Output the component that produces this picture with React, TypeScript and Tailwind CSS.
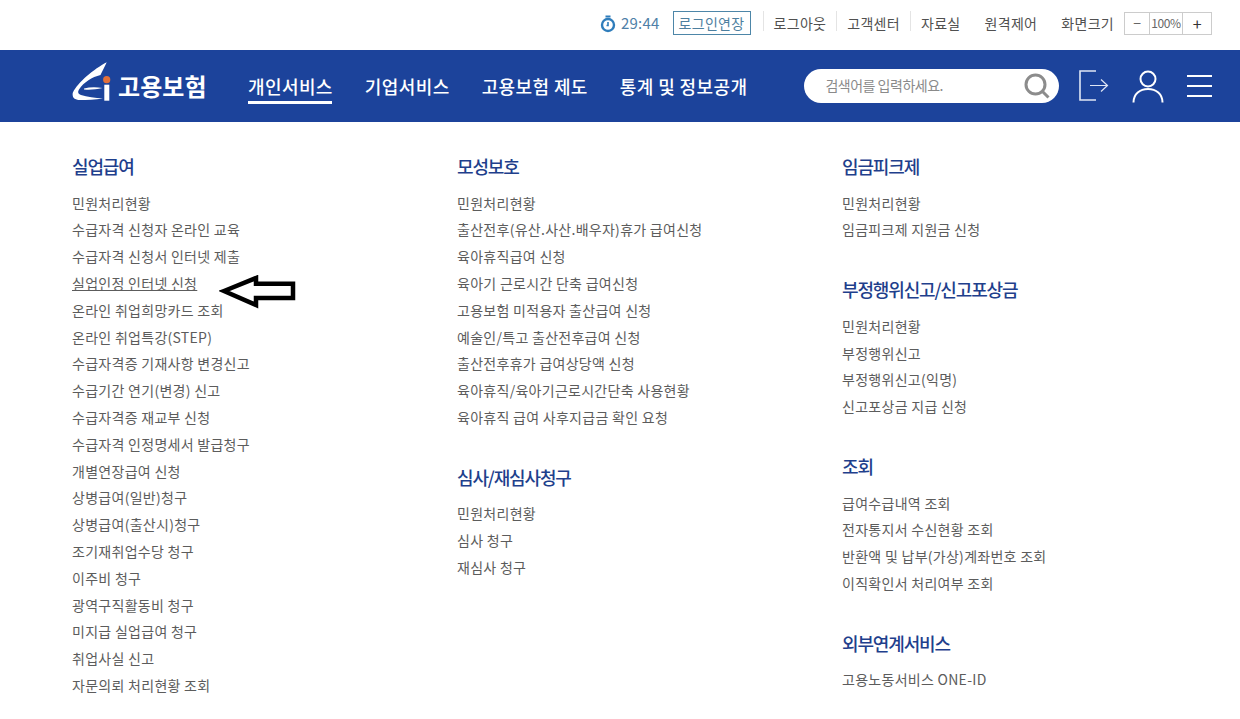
import React from "react";

const font = { fontFamily: '"Noto Sans CJK KR", "Noto Sans", sans-serif' };

type Group = { title: string; items: string[] };

const col1: Group[] = [
  {
    title: "실업급여",
    items: [
      "민원처리현황",
      "수급자격 신청자 온라인 교육",
      "수급자격 신청서 인터넷 제출",
      "실업인정 인터넷 신청",
      "온라인 취업희망카드 조회",
      "온라인 취업특강(STEP)",
      "수급자격증 기재사항 변경신고",
      "수급기간 연기(변경) 신고",
      "수급자격증 재교부 신청",
      "수급자격 인정명세서 발급청구",
      "개별연장급여 신청",
      "상병급여(일반)청구",
      "상병급여(출산시)청구",
      "조기재취업수당 청구",
      "이주비 청구",
      "광역구직활동비 청구",
      "미지급 실업급여 청구",
      "취업사실 신고",
      "자문의뢰 처리현황 조회",
    ],
  },
];

const col2: Group[] = [
  {
    title: "모성보호",
    items: [
      "민원처리현황",
      "출산전후(유산.사산.배우자)휴가 급여신청",
      "육아휴직급여 신청",
      "육아기 근로시간 단축 급여신청",
      "고용보험 미적용자 출산급여 신청",
      "예술인/특고 출산전후급여 신청",
      "출산전후휴가 급여상당액 신청",
      "육아휴직/육아기근로시간단축 사용현황",
      "육아휴직 급여 사후지급금 확인 요청",
    ],
  },
  {
    title: "심사/재심사청구",
    items: ["민원처리현황", "심사 청구", "재심사 청구"],
  },
];

const col3: Group[] = [
  { title: "임금피크제", items: ["민원처리현황", "임금피크제 지원금 신청"] },
  {
    title: "부정행위신고/신고포상금",
    items: ["민원처리현황", "부정행위신고", "부정행위신고(익명)", "신고포상금 지급 신청"],
  },
  {
    title: "조회",
    items: [
      "급여수급내역 조회",
      "전자통지서 수신현황 조회",
      "반환액 및 납부(가상)계좌번호 조회",
      "이직확인서 처리여부 조회",
    ],
  },
  { title: "외부연계서비스", items: ["고용노동서비스 ONE-ID"] },
];

function Column({ groups }: { groups: Group[] }) {
  return (
    <div className="w-[385px] shrink-0">
      {groups.map((g, i) => (
        <section key={g.title} className={i > 0 ? "mt-[32px]" : ""}>
          <h2 className="h-[30px] mb-[7.6px] text-[18px] leading-[28px] font-medium text-[#1f3f8c] tracking-[-1.15px]">
            {g.title}
          </h2>
          <ul>
            {g.items.map((t) => (
              <li
                key={t}
                className={
                  "h-[26.8px] text-[14px] leading-[26.8px] text-[#5c5c5c] tracking-[0.28px] whitespace-nowrap" +
                  (t === "실업인정 인터넷 신청" ? " underline" : "")
                }
              >
                {t}
              </li>
            ))}
          </ul>
        </section>
      ))}
    </div>
  );
}

function Sep() {
  return <span className="w-px h-[20px] mt-[-4px] bg-[#e4e4e4]" />;
}

export default function App() {
  return (
    <div style={font} className="relative w-[1240px] h-[719px] overflow-hidden bg-white">
      {/* top utility bar */}
      <div className="h-[50px] flex items-center justify-end pr-[28px] pb-[4px] text-[14px] text-[#505050] tracking-[0.3px]">
        <svg width="16" height="18" viewBox="0 0 16 18" className="mr-[5px] mt-[2px]">
          <rect x="5.5" y="0.5" width="5" height="2" fill="#2f7dbb" />
          <circle cx="8" cy="10" r="6" fill="none" stroke="#2f7dbb" strokeWidth="2.4" />
          <path d="M8 7v3.5h-1.5" fill="none" stroke="#2f7dbb" strokeWidth="1.6" />
        </svg>
        <span className="text-[#4f7fa8] text-[15px] tracking-[0.2px] mr-[13px]">29:44</span>
        <span className="w-[78px] h-[24px] border border-[#4d86a8] text-[#4d7f9f] flex items-center justify-center mr-[12px]">
          로그인연장
        </span>
        <Sep />
        <span className="ml-[10px] mr-[10px]">로그아웃</span>
        <Sep />
        <span className="mx-[10px]">고객센터</span>
        <Sep />
        <span className="ml-[10px] mr-[24px]">자료실</span>
        <span className="mr-[24px]">원격제어</span>
        <span className="mr-[10px]">화면크기</span>
        <div className="flex h-[23px] border border-[#cccccc] text-[#666666] text-[12px] tracking-[-0.4px]">
          <span className="w-[25px] flex items-center justify-center border-r border-[#cccccc] text-[14px]">−</span>
          <span className="w-[33px] flex items-center justify-center border-r border-[#cccccc]">100%</span>
          <span className="w-[28px] flex items-center justify-center text-[16px] text-[#333333]">+</span>
        </div>
      </div>

      {/* main nav */}
      <header className="h-[72px] bg-[#1c439b] flex items-center pl-[72px] text-white">
        <svg width="46" height="44" viewBox="0 0 46 44" className="mt-[-8px]">
          <path
            d="M34.700 2.300 C 22 9 6 22 0.700 33 C 0 38 3 40 8 40 C 15 40 23 40 31 38.500 C 23 38 15 37 9 35 C 6 34 5.500 32 7 29.500 C 12 22 20 17 28.500 15 C 30.500 11 33 6 34.700 2.300 Z"
            fill="#ffffff"
          />
          <path d="M12 28.500 C 18 27 24 27 30.500 28 C 24 29.500 18 30 12 29.500 Z" fill="#ffffff" />
          <circle cx="34.700" cy="19.700" r="3.600" fill="#e2703a" />
          <rect x="32.300" y="24.700" width="5" height="16" fill="#ffffff" />
        </svg>
        <span className="text-[24px] font-bold tracking-[0.1px] w-[130px] leading-none">고용보험</span>
        <nav className="flex items-center gap-[32px] text-[18px] font-medium tracking-[0.4px] h-full">
          <span className="relative">
            개인서비스
            <span className="absolute left-0 right-[1px] top-[28px] h-[3px] bg-white" />
          </span>
          <span>기업서비스</span>
          <span>고용보험 제도</span>
          <span>통계 및 정보공개</span>
        </nav>
        <div className="ml-[57px] mt-[-1px] w-[255px] h-[34px] rounded-full bg-white flex items-center justify-between pl-[21px] pr-[9px]">
          <span className="text-[14px] text-[#8a8a8a] tracking-[-0.5px]">검색어를 입력하세요.</span>
          <svg width="26" height="26" viewBox="0 0 26 26">
            <circle cx="11.500" cy="11.500" r="9.500" fill="none" stroke="#8c8c8c" strokeWidth="3" />
            <path d="M18.500 18.500l6 6" stroke="#8c8c8c" strokeWidth="3" />
          </svg>
        </div>
        <svg width="30" height="32" viewBox="0 0 30 32" className="ml-[20px]" fill="none" stroke="#dfe6f5" strokeWidth="1.600">
          <path d="M17 1H1v29h16" />
          <path d="M11 15.500h17M22 9.500l6.500 6-6.500 6" strokeWidth="1.200" />
        </svg>
        <svg width="32" height="33" viewBox="0 0 32 33" className="ml-[23px]" fill="none" stroke="#ffffff" strokeWidth="2">
          <circle cx="16" cy="9" r="7.500" />
          <path d="M1.500 32.500C1.500 24 8 19 16 19s14.500 5 14.500 13.500" />
        </svg>
        <svg width="25" height="24" viewBox="0 0 25 24" className="ml-[23px]" stroke="#ffffff" strokeWidth="2">
          <path d="M0 2h25M0 12h25M0 22h25" />
        </svg>
      </header>

      {/* sitemap columns */}
      <main className="flex pl-[72px] pt-[30px]">
        <Column groups={col1} />
        <Column groups={col2} />
        <Column groups={col3} />
      </main>

      {/* hand-drawn annotation arrow */}
      <svg width="78" height="34" viewBox="0 0 78 34" className="absolute left-[219px] top-[275px]">
        <path d="M5 16 L37 3 L37 8.700 L74 8.700 L74 23 L37 23 L37 30 Z" fill="#ffffff" stroke="#000000" strokeWidth="4.500" />
      </svg>
    </div>
  );
}
